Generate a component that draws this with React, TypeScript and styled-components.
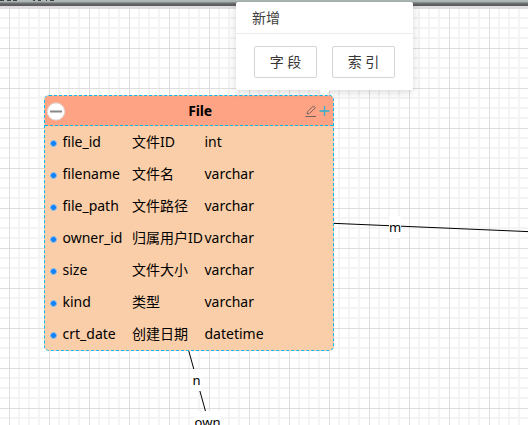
import React from "react";
import styled, { createGlobalStyle } from "styled-components";

const Global = createGlobalStyle`
  * { box-sizing: border-box; }
  body { margin: 0; overflow: hidden; background: #fff; }
`;

const Page = styled.div`
  display: flex;
  flex-direction: column;
  width: 528px;
  height: 425px;
  overflow: hidden;
  font-family: "Noto Sans", "Noto Sans CJK SC", sans-serif;
  color: #000;
`;

const TopBar = styled.header`
  flex: none;
  height: 8px;
  overflow: hidden;
  background: linear-gradient(#afbab8 0 1px, #aab5b3 1px 2px, #899190 2px 3px, #6f7071 3px 4px, #636263 4px 5px, #5f5c5f 5px 6px, #dfdde0 6px 8px);
`;

const TopMarks = styled.svg`
  display: block;
`;

const minor = "transparent 0 9px, #f4f4f4 9px 11px, transparent 11px 19px, #f4f4f4 19px 21px, transparent 21px 29px, #f4f4f4 29px 31px, transparent 31px 40px";

const Canvas = styled.main`
  position: relative;
  flex: 1;
  background-color: #fff;
  background-image:
    linear-gradient(90deg, #dedede 1px, transparent 1px),
    linear-gradient(#dedede 1px, transparent 1px),
    linear-gradient(90deg, ${minor}),
    linear-gradient(${minor});
  background-size: 40px 40px;
  background-position: 9px 0;
`;

const Edges = styled.svg`
  position: absolute;
  inset: 0;
`;

const EdgeLabel = styled.span<{ $x: number; $y: number; $w: number }>`
  position: absolute;
  left: ${(p) => p.$x}px;
  top: ${(p) => p.$y}px;
  width: ${(p) => p.$w}px;
  height: 22px;
  background: #fff;
  font-size: 13px;
  line-height: 22px;
  text-align: center;
`;

const Entity = styled.section`
  position: absolute;
  left: 44px;
  top: 87px;
  width: 290px;
  height: 256px;
  border: 1px dashed #00b7f4;
  border-radius: 5px;
  background: #facea8;
  overflow: hidden;
`;

const EntityHead = styled.div`
  display: grid;
  grid-template-columns: 22px 1fr 28px;
  align-items: center;
  height: 30px;
  background: #ffa385;
  border-bottom: 1px dashed #00b7f4;
`;

const Title = styled.h2`
  margin: 0;
  padding-left: 28px;
  font-size: 14px;
  letter-spacing: -0.2px;
  line-height: 28px;
  text-align: center;
`;

const HeadIcons = styled.div`
  display: flex;
  align-items: center;
  gap: 2px;
`;

const Rows = styled.ul`
  margin: 0;
  padding: 0;
  list-style: none;
`;

const Row = styled.li`
  display: grid;
  grid-template-columns: 17.5px 69.5px 72.5px 1fr;
  align-items: center;
  height: 32px;
  font-size: 14px;
  line-height: 32px;
  white-space: nowrap;
`;

const Port = styled.i`
  width: 7px;
  height: 7px;
  margin: 3px 0 0 5px;
  border: 1px solid #8ebdea;
  border-radius: 50%;
  background: #1280f5;
`;

const Popover = styled.aside`
  position: absolute;
  left: 236px;
  top: -6px;
  width: 177px;
  height: 88px;
  border-radius: 2px;
  background: #fff;
  box-shadow: 0 2px 9px rgba(0, 0, 0, 0.16);
  color: #404040;
  font-size: 14px;
`;

const PopTitle = styled.div`
  height: 32px;
  padding-left: 16px;
  border-bottom: 1px solid #ececec;
  line-height: 31px;
`;

const Actions = styled.div`
  display: flex;
  gap: 15px;
  padding: 12px 18px;
`;

const Action = styled.button`
  width: 63px;
  height: 32px;
  padding: 0;
  border: 1px solid #d5d5d5;
  border-radius: 2px;
  background: #fff;
  color: #363636;
  font: inherit;
  line-height: 28px;
`;

const Arrow = styled.i`
  position: absolute;
  left: 84px;
  bottom: -4px;
  width: 9px;
  height: 9px;
  background: #fff;
  transform: rotate(45deg);
`;

const fields = [
  ["file_id", "文件ID", "int"],
  ["filename", "文件名", "varchar"],
  ["file_path", "文件路径", "varchar"],
  ["owner_id", "归属用户ID", "varchar"],
  ["size", "文件大小", "varchar"],
  ["kind", "类型", "varchar"],
  ["crt_date", "创建日期", "datetime"],
];

export default function App() {
  return (
    <>
      <Global />
      <Page>
        <TopBar>
          <TopMarks width="60" height="1">
            <path d="M0 .5h4M7 .5h4M13 .5h4M33 .5h2M38 .5h3M46 .5h1M50 .5h4" stroke="#3d4242" />
          </TopMarks>
        </TopBar>
        <Canvas>
          <Edges width="528" height="417" fill="none" stroke="#000" strokeWidth="1">
            <path d="M333 215.3 528 223.6M188.5 342 206 405" />
          </Edges>
          <EdgeLabel $x={389} $y={208} $w={12}>m</EdgeLabel>
          <EdgeLabel $x={192} $y={361} $w={9}>n</EdgeLabel>
          <EdgeLabel $x={194} $y={403} $w={27}>own</EdgeLabel>
          <Entity>
            <EntityHead>
              <svg width="22" height="20" viewBox="0 0 22 20">
                <circle cx="11" cy="10.5" r="8.6" fill="#fff" stroke="#ddd" />
                <path d="M5 10.5h12" stroke="#888" strokeWidth="2" />
              </svg>
              <Title>File</Title>
              <HeadIcons>
                <svg width="12" height="12" viewBox="0 0 12 12" fill="none" stroke="#74645f">
                  <path d="M.5 11.5H11M2 9l.5-2.2L8.4.9l1.9 1.9L4.4 8.6 2 9Z" />
                </svg>
                <svg width="11" height="12" viewBox="0 0 11 12" stroke="#2fb0cf" strokeWidth="1.3">
                  <path d="M.5 6h10M5.5 1v10" />
                </svg>
              </HeadIcons>
            </EntityHead>
            <Rows>
              {fields.map(([name, label, type]) => (
                <Row key={name}>
                  <Port />
                  <span>{name}</span>
                  <span>{label}</span>
                  <span>{type}</span>
                </Row>
              ))}
            </Rows>
          </Entity>
          <Popover>
            <PopTitle>新增</PopTitle>
            <Actions>
              <Action>字 段</Action>
              <Action>索 引</Action>
            </Actions>
            <Arrow />
          </Popover>
        </Canvas>
      </Page>
    </>
  );
}
